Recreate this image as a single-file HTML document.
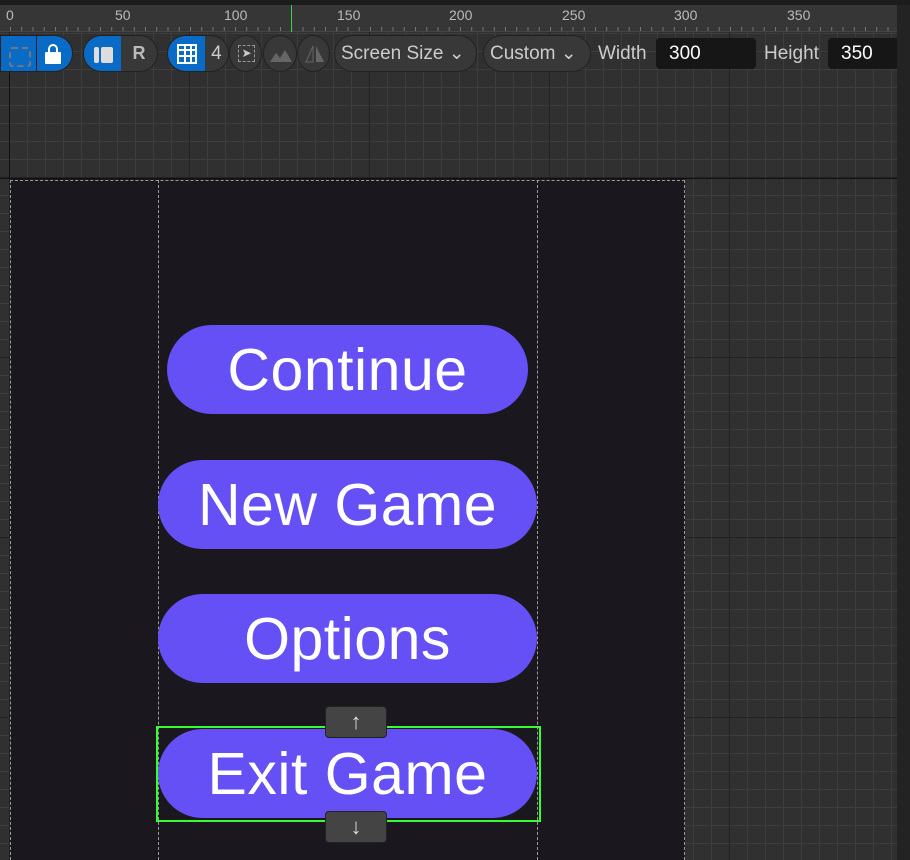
<!DOCTYPE html>
<html><head><style>
*{margin:0;padding:0;box-sizing:border-box}
body{width:910px;height:860px;overflow:hidden;position:relative;font-family:"Liberation Sans",sans-serif;
background-color:#303030;
background-image:
linear-gradient(90deg,#222 0 1px,transparent 1px),
linear-gradient(0deg,#222 0 1px,transparent 1px),
linear-gradient(90deg,#3d3d3d 0 1px,transparent 1px),
linear-gradient(0deg,#3d3d3d 0 1px,transparent 1px);
background-size:180px 180px,180px 180px,18px 18px,18px 18px;
background-position:9px 0,0 178px,9px 0,0 16px;}
.top{position:absolute;left:0;top:0;width:910px;height:5px;background:#1c1c1c}
.ruler{position:absolute;left:0;top:5px;width:897px;height:27px;background:#363636;border-bottom:1px solid #444;
background-image:linear-gradient(90deg,#777 0 1px,transparent 1px);background-size:11.25px 5px;background-repeat:repeat-x;background-position:10px 22px}
.rl{position:absolute;top:7px;font-size:14px;color:#bbb}
.tk{position:absolute;top:18px;width:1px;height:10px;background:#888}
.sb{position:absolute;right:0;top:5px;width:13px;height:855px;background:#232323}
.pill{position:absolute;top:35px;height:37px;border-radius:19px;background:#383838;border:1px solid #222;overflow:hidden;display:flex}
.blue{background:#0a6bc6}
.lbl{position:absolute;top:43px;font-size:19px;color:#ccc}
.inp{position:absolute;top:38px;height:31px;background:#161616;border-radius:4px;color:#fff;font-size:19px;padding:5px 0 0 13px}
.canvas{position:absolute;left:10px;top:179px;width:675px;height:681px;background:#1a181e}
.dv{position:absolute;width:0;border-left:1px dashed #999}
.btn{position:absolute;background:#6450f5;border-radius:45px;color:#fff;font-size:59px;text-align:center;line-height:90px;height:89px;letter-spacing:0.5px}
.h{position:absolute;left:325px;width:62px;height:32px;background:#444;border:1px solid #222;border-radius:4px;color:#ddd;font-size:22px;text-align:center;line-height:30px}
</style></head><body>
<div class="top"></div>
<div class="ruler"></div>
<div class="rl" style="left:6px">0</div><div class="rl" style="left:115px">50</div><div class="rl" style="left:224px">100</div><div class="rl" style="left:337px">150</div><div class="rl" style="left:449px">200</div><div class="rl" style="left:562px">250</div><div class="rl" style="left:674px">300</div><div class="rl" style="left:787px">350</div>
<div class="tk" style="left:291px;top:5px;height:27px;background:#4c4"></div>
<div class="sb"></div>
<div style="position:absolute;left:9px;top:73px;width:1px;height:106px;background:#111"></div>
<div style="position:absolute;left:0;top:178px;width:897px;height:1px;background:#111"></div>
<div class="pill" style="left:0;width:73px;border-radius:0 19px 19px 0"><div class="blue" style="width:37px;border-right:1px solid #222"><div style="margin:11px 0 0 8px;width:22px;height:20px;border:2px dashed #777;border-radius:3px"></div></div><div class="blue" style="width:36px;position:relative"><div style="position:absolute;left:11px;top:8px;width:10px;height:10px;border:2px solid #fff;border-bottom:none;border-radius:5px 5px 0 0"></div><div style="position:absolute;left:8px;top:16px;width:16px;height:12px;background:#fff;border-radius:1px"></div></div></div>
<div class="pill" style="left:83px;width:75px"><div class="blue" style="width:38px;position:relative"><div style="position:absolute;left:10px;top:11px;width:5px;height:16px;background:#ddd;border-radius:2px"></div><div style="position:absolute;left:17px;top:11px;width:12px;height:16px;background:#ddd;border-radius:2px"></div></div><div style="width:37px;color:#bbb;font-weight:bold;font-size:18px;text-align:center;line-height:35px">R</div></div>
<div class="pill" style="left:167px;width:62px"><div class="blue" style="width:38px;position:relative"><div style="position:absolute;left:9px;top:8px;width:20px;height:20px;border:2px solid #fff;background:linear-gradient(90deg,transparent 5px,#fff 5px 7px,transparent 7px 11px,#fff 11px 13px,transparent 13px),linear-gradient(0deg,transparent 5px,#fff 5px 7px,transparent 7px 11px,#fff 11px 13px,transparent 13px)"></div></div><div style="width:24px;color:#ccc;font-size:19px;line-height:35px;text-align:center">4</div></div>
<div class="pill" style="left:229px;width:33px;border-radius:50%"><div style="margin:9px 0 0 8px;width:17px;height:17px;border:1px dashed #999;color:#ccc;font-size:12px;text-align:center">➤</div></div>
<div class="pill" style="left:263px;width:34px;border-radius:50%"><svg width="34" height="37"><path d="M6 26 L12 17 L16 22 L21 14 L28 26Z" fill="#666"/></svg></div>
<div class="pill" style="left:297px;width:33px;border-radius:50%"><svg width="33" height="37"><path d="M15 10 L8 26 H15Z" fill="none" stroke="#666"/><path d="M18 10 L26 26 H18Z" fill="#666"/></svg></div>
<div class="pill" style="left:334px;width:143px;color:#ccc;font-size:19px;line-height:35px;padding-left:6px">Screen Size ⌄</div>
<div class="pill" style="left:483px;width:108px;color:#ccc;font-size:19px;line-height:35px;padding-left:6px">Custom ⌄</div>
<div class="lbl" style="left:598px">Width</div>
<div class="inp" style="left:656px;width:100px">300</div>
<div class="lbl" style="left:764px">Height</div>
<div class="inp" style="left:828px;width:69px;border-radius:4px 0 0 4px">350</div>
<div class="canvas"></div>
<div style="position:absolute;left:10px;top:180px;width:675px;border-top:1px dashed #999"></div>
<div class="dv" style="left:10px;top:180px;height:680px"></div>
<div class="dv" style="left:158px;top:180px;height:680px"></div>
<div class="dv" style="left:537px;top:180px;height:680px"></div>
<div class="dv" style="left:684px;top:180px;height:680px"></div>
<div class="btn" style="left:167px;top:325px;width:361px">Continue</div>
<div class="btn" style="left:158px;top:460px;width:379px">New Game</div>
<div class="btn" style="left:158px;top:594px;width:379px">Options</div>
<div class="btn" style="left:158px;top:729px;width:379px">Exit Game</div>
<div style="position:absolute;left:156px;top:726px;width:385px;height:96px;border:2px solid #3f3"></div>
<div class="h" style="top:706px">↑</div>
<div class="h" style="top:811px">↓</div>
</body></html>
